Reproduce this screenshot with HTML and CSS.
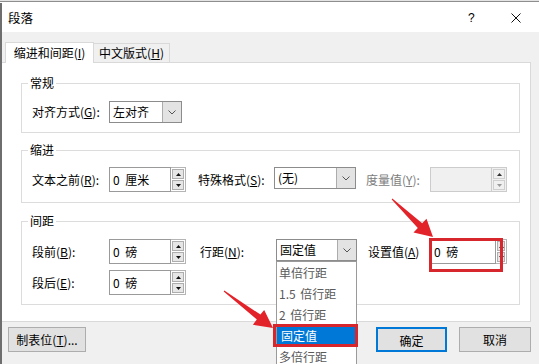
FILE: index.html
```html
<!DOCTYPE html>
<html lang="zh-CN">
<head>
<meta charset="utf-8">
<title>段落</title>
<link rel="stylesheet" href="styles.css">
</head>
<body>
<div class="topstrip"></div>
<div class="dialog">
  <div class="titlebar">
    <span class="title">段落</span>
    <span class="help">?</span>
    <svg class="close" width="10" height="10" viewBox="0 0 10 10"><path d="M0.5 0.5 L9.5 9.5 M9.5 0.5 L0.5 9.5" stroke="#111" stroke-width="1" fill="none"/></svg>
  </div>

  <div class="tabs">
    <div class="tab active">缩进和间距(<u>I</u>)</div>
    <div class="tab">中文版式(<u>H</u>)</div>
  </div>

  <div class="panel">
    <fieldset class="group g1">
      <legend>常规</legend>
      <div class="row">
        <span class="lbl w77">对齐方式(<u>G</u>):</span>
        <div class="combo w73">
          <span class="val">左对齐</span>
          <span class="drop"><svg width="8" height="5" viewBox="0 0 8 5"><path d="M0.5 0.5 L4 4 L7.5 0.5" stroke="#555" fill="none"/></svg></span>
        </div>
      </div>
    </fieldset>

    <fieldset class="group g2">
      <legend>缩进</legend>
      <div class="row">
        <span class="lbl w77">文本之前(<u>R</u>):</span>
        <div class="spin w77">
          <span class="field">0 厘米</span>
          <span class="btns">
            <span class="sb"><svg width="5" height="3" viewBox="0 0 5 3"><polygon points="0,3 2.5,0 5,3" fill="#111"/></svg></span>
            <span class="sb"><svg width="5" height="3" viewBox="0 0 5 3"><polygon points="0,0 5,0 2.5,3" fill="#111"/></svg></span>
          </span>
        </div>
        <span class="lbl w76 ml12">特殊格式(<u>S</u>):</span>
        <div class="combo w82">
          <span class="val">(无)</span>
          <span class="drop"><svg width="8" height="5" viewBox="0 0 8 5"><path d="M0.5 0.5 L4 4 L7.5 0.5" stroke="#555" fill="none"/></svg></span>
        </div>
        <span class="lbl w64 ml10 disabled">度量值(<u>Y</u>):</span>
        <div class="spin w77 off">
          <span class="field"></span>
          <span class="btns">
            <span class="sb"><svg width="5" height="3" viewBox="0 0 5 3"><polygon points="0,3 2.5,0 5,3" fill="#333"/></svg></span>
            <span class="sb"><svg width="5" height="3" viewBox="0 0 5 3"><polygon points="0,0 5,0 2.5,3" fill="#999"/></svg></span>
          </span>
        </div>
      </div>
    </fieldset>

    <fieldset class="group g3">
      <legend>间距</legend>
      <div class="row">
        <span class="lbl w77">段前(<u>B</u>):</span>
        <div class="spin w77">
          <span class="field">0 磅</span>
          <span class="btns">
            <span class="sb"><svg width="5" height="3" viewBox="0 0 5 3"><polygon points="0,3 2.5,0 5,3" fill="#111"/></svg></span>
            <span class="sb"><svg width="5" height="3" viewBox="0 0 5 3"><polygon points="0,0 5,0 2.5,3" fill="#111"/></svg></span>
          </span>
        </div>
        <span class="lbl w76 ml14">行距(<u>N</u>):</span>
        <div class="combo w81 open">
          <span class="val">固定值</span>
          <span class="drop"><svg width="8" height="5" viewBox="0 0 8 5"><path d="M0.5 0.5 L4 4 L7.5 0.5" stroke="#555" fill="none"/></svg></span>
          <ul class="list">
            <li>单倍行距</li>
            <li>1.5 倍行距</li>
            <li>2 倍行距</li>
            <li class="sel">固定值</li>
            <li>多倍行距</li>
          </ul>
        </div>
        <span class="lbl w62 ml11">设置值(<u>A</u>)</span>
        <div class="spin w77 narrow marked">
          <span class="field">0 磅</span>
          <span class="btns">
            <span class="sb"><svg width="5" height="3" viewBox="0 0 5 3"><polygon points="0,3 2.5,0 5,3" fill="#111"/></svg></span>
            <span class="sb"><svg width="5" height="3" viewBox="0 0 5 3"><polygon points="0,0 5,0 2.5,3" fill="#111"/></svg></span>
          </span>
        </div>
      </div>
      <div class="row r2">
        <span class="lbl w77">段后(<u>E</u>):</span>
        <div class="spin w77">
          <span class="field">0 磅</span>
          <span class="btns">
            <span class="sb"><svg width="5" height="3" viewBox="0 0 5 3"><polygon points="0,3 2.5,0 5,3" fill="#111"/></svg></span>
            <span class="sb"><svg width="5" height="3" viewBox="0 0 5 3"><polygon points="0,0 5,0 2.5,3" fill="#111"/></svg></span>
          </span>
        </div>
      </div>
    </fieldset>
  </div>

  <div class="buttons">
    <button class="btn tabstop">制表位(<u>T</u>)...</button>
    <button class="btn ok">确定</button>
    <button class="btn cancel">取消</button>
  </div>
</div>

<svg class="arrows" width="539" height="364" viewBox="0 0 539 364">
  <polygon fill="#e3232a" points="391.7,199.4 417.8,227.9 413.5,232.4 433,237 426.5,218.8 422.2,223.3 392.3,198.6"/>
  <polygon fill="#e3232a" points="223.7,291.4 256.8,319.5 252.9,324.7 273,328 264.2,310.1 260.4,314.6 224.3,290.6"/>
</svg>
</body>
</html>
```

FILE: styles.css
```css
* { box-sizing: border-box; }
html, body { margin: 0; padding: 0; }
body {
  width: 539px;
  height: 364px;
  overflow: hidden;
  position: relative;
  background: #f0f0f0;
  font-family: "Noto Sans CJK SC", "Microsoft YaHei", sans-serif;
  font-size: 12px;
  line-height: 16px;
  color: #000;
}
u { text-decoration: underline; text-underline-offset: 1px; }

.topstrip {
  height: 3px;
  background: linear-gradient(#e4e4e4 0 1px, #8e8e8e 1px 2px, #ffffff 2px);
}
.dialog {
  border-left: 2px solid #6e6e6e;
  height: 361px;
  background: #f0f0f0;
}
.titlebar {
  height: 29px;
  background: #fff;
  display: flex;
  align-items: center;
  padding-left: 6px;
  padding-right: 18px;
}
.title { flex: 1; font-size: 12.5px; }
.help {
  width: 6px;
  margin-right: 37px;
  font-family: "Liberation Sans", sans-serif;
  font-size: 12px;
  text-align: center;
}
.close { display: block; }

.tabs {
  margin-top: 10px;
  height: 20px;
  padding-left: 3px;
  display: flex;
  align-items: flex-end;
}
.tab {
  height: 19px;
  width: 77px;
  margin-left: -1px;
  border: 1px solid #d9d9d9;
  border-bottom: none;
  background: #f0f0f0;
  text-align: center;
  line-height: 18px;
}
.tab.active {
  width: 89px;
  height: 21px;
  margin-left: 0;
  margin-bottom: -1px;
  background: #fff;
  position: relative;
  z-index: 1;
  line-height: 20px;
}

.panel {
  background: #fff;
  border: 1px solid #d9d9d9;
  border-left: none;
  margin-right: 8px;
  padding: 12px 10px 16px 19px;
}
.group {
  margin: 0;
  min-width: 0;
  border: 1px solid #dcdcdc;
  padding: 10px 10px 9px 10px;
}
.group legend {
  padding: 0 2px;
  margin-left: -4px;
  line-height: 16px;
}
.g2 { margin-top: 9px; padding-top: 9px; padding-bottom: 10px; }
.g3 { margin-top: 10px; padding-top: 10px; padding-bottom: 9px; }

.row { display: flex; align-items: center; }
.row.r2 { margin-top: 6px; }
.g1 .row { height: 22px; }

.lbl { flex: none; white-space: nowrap; }
.lbl.disabled { color: #7d7d7d; }
.w62 { width: 62px; }
.w64 { width: 64px; }
.w73 { width: 73px; }
.w76 { width: 76px; }
.w77 { width: 77px; }
.w81 { width: 81px; }
.w82 { width: 82px; }
.ml10 { margin-left: 10px; }
.ml11 { margin-left: 11px; }
.ml12 { margin-left: 12px; }
.ml14 { margin-left: 14px; }

.combo {
  flex: none;
  align-self: flex-start;
  height: 22px;
  display: flex;
  border: 1px solid #8c8c8c;
  background: #fff;
  position: relative;
}
.combo .val {
  flex: 1;
  padding-left: 3px;
  line-height: 20px;
  white-space: nowrap;
}
.combo .drop {
  width: 19px;
  background: #e3e3e3;
  border-left: 1px solid #acacac;
  display: flex;
  align-items: center;
  justify-content: center;
}
.combo .drop svg { display: block; }

.list {
  position: absolute;
  left: -1px;
  right: -1px;
  top: 21px;
  margin: 0;
  padding: 0;
  list-style: none;
  background: #fff;
  border: 1px solid #9a9a9a;
  z-index: 5;
}
.list li {
  height: 21px;
  line-height: 21px;
  padding-left: 2px;
  color: #5a5a5a;
  white-space: nowrap;
  word-spacing: 2px;
}
.list li.sel {
  position: relative;
  background: #0078d7;
  color: #fff;
  padding-left: 4px;
}
.list li.sel::after {
  content: "";
  position: absolute;
  left: -4px;
  right: -2px;
  top: -1px;
  bottom: -1px;
  border: 3px solid #d8262d;
}

.spin {
  flex: none;
  height: 25px;
  display: flex;
  position: relative;
}
.spin .field {
  flex: 1;
  border: 1px solid #9a9a9a;
  background: #fff;
  padding-left: 3px;
  line-height: 23px;
  white-space: nowrap;
  word-spacing: 3px;
}
.spin .btns {
  width: 15px;
  display: flex;
  flex-direction: column;
  gap: 1px;
  padding: 1px;
  border: 1px solid #b5b5b5;
  border-left: none;
  background: #fff;
}
.spin.narrow .btns { width: 11px; }
.spin .sb {
  flex: 1;
  background: #e6e6e6;
  border: 1px solid #adadad;
  display: flex;
  align-items: center;
  justify-content: center;
}
.spin .sb svg { display: block; }
.spin.off .field { background: #f0f0f0; border-color: #cccccc; }
.spin.off .btns { border-color: #cccccc; background: #f0f0f0; }
.spin.off .sb { background: #f0f0f0; border-color: #cfcfcf; }
.spin.marked::after {
  content: "";
  position: absolute;
  left: -1px;
  top: -1px;
  width: 68px;
  height: 28px;
  border: 3px solid #d8262d;
}

.buttons {
  display: flex;
  margin-top: 5px;
  padding: 0 8px 0 6px;
  gap: 12px;
}
.btn {
  height: 25px;
  padding: 0;
  font: inherit;
  color: #000;
  background: #e1e1e1;
  border: 1px solid #adadad;
  line-height: 23px;
  text-align: center;
}
.btn.tabstop { width: 78px; }
.btn.ok {
  width: 71px;
  margin-left: auto;
  border: 2px solid #0078d7;
}
.btn.cancel { width: 72px; }

.arrows {
  position: absolute;
  left: 0;
  top: 0;
  z-index: 10;
  pointer-events: none;
}
```
